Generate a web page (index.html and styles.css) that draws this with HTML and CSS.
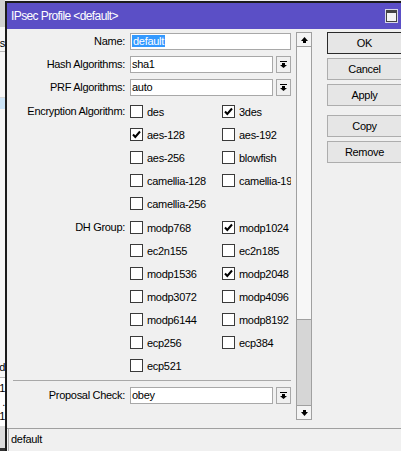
FILE: index.html
```html
<!DOCTYPE html>
<html lang="en">
<head>
  <meta charset="UTF-8">
  <title>IPsec Profile &lt;default&gt;</title>
  <link rel="stylesheet" href="styles.css">
</head>
<body>
  <div class="desk">
    <div class="behind">
      <div class="b-head"></div>
      <div class="b-row b-line b-first"><span>os</span></div>
      <div class="b-gap"></div>
      <div class="b-sel"></div>
      <div class="b-fill"></div>
      <div class="b-row b-line"><span>d</span></div>
      <div class="b-list">
        <span>1</span>
        <span>.</span>
        <span>1</span>
      </div>
      <div class="b-foot"></div>
    </div>

    <div class="window">
      <div class="titlebar">
        <span class="title">IPsec Profile &lt;default&gt;</span>
        <span class="max-btn"></span>
      </div>

      <div class="main">
        <div class="form-area">
          <div class="form">
            <label>Name:</label>
            <div class="input"><span class="selected">default</span></div>

            <label>Hash Algorithms:</label>
            <div class="combo">
              <div class="input">sha1</div>
              <span class="drop"><svg width="7" height="7" viewBox="0 0 7 7"><rect x="0" y="0" width="7" height="1" fill="#000"/><rect x="2" y="2" width="3" height="2" fill="#000"/><polygon points="0,4 7,4 3.5,7" fill="#000"/></svg></span>
            </div>

            <label>PRF Algorithms:</label>
            <div class="combo">
              <div class="input">auto</div>
              <span class="drop"><svg width="7" height="7" viewBox="0 0 7 7"><rect x="0" y="0" width="7" height="1" fill="#000"/><rect x="2" y="2" width="3" height="2" fill="#000"/><polygon points="0,4 7,4 3.5,7" fill="#000"/></svg></span>
            </div>

            <label class="top">Encryption Algorithm:</label>
            <div class="checks" id="encChecks"></div>

            <label class="top">DH Group:</label>
            <div class="checks" id="dhChecks"></div>

            <div class="sep"></div>

            <label>Proposal Check:</label>
            <div class="combo">
              <div class="input">obey</div>
              <span class="drop"><svg width="7" height="7" viewBox="0 0 7 7"><rect x="0" y="0" width="7" height="1" fill="#000"/><rect x="2" y="2" width="3" height="2" fill="#000"/><polygon points="0,4 7,4 3.5,7" fill="#000"/></svg></span>
            </div>
          </div>

          <div class="scroll">
            <span class="sbtn"><svg width="7" height="6" viewBox="0 0 7 6"><polygon points="3.5,0 7,4 0,4" fill="#000"/><rect x="2" y="4" width="3" height="2" fill="#000"/></svg></span>
            <div class="track"></div>
            <div class="thumb"></div>
            <span class="sbtn"><svg width="7" height="6" viewBox="0 0 7 6"><rect x="2" y="0" width="3" height="2" fill="#000"/><polygon points="0,2 7,2 3.5,6" fill="#000"/></svg></span>
          </div>
        </div>

        <div class="buttons">
          <button class="default">OK</button>
          <button>Cancel</button>
          <button>Apply</button>
          <button class="spaced">Copy</button>
          <button>Remove</button>
        </div>
      </div>

      <div class="status">
        <div class="status-field">default</div>
      </div>
    </div>
  </div>

  <script>
    const encryption = [
      ['des', false], ['3des', true],
      ['aes-128', true], ['aes-192', false],
      ['aes-256', false], ['blowfish', false],
      ['camellia-128', false], ['camellia-192', false],
      ['camellia-256', false]
    ];
    const dhGroups = [
      ['modp768', false], ['modp1024', true],
      ['ec2n155', false], ['ec2n185', false],
      ['modp1536', false], ['modp2048', true],
      ['modp3072', false], ['modp4096', false],
      ['modp6144', false], ['modp8192', false],
      ['ecp256', false], ['ecp384', false],
      ['ecp521', false]
    ];

    function fillChecks(id, items) {
      const box = document.getElementById(id);
      items.forEach(([name, on]) => {
        const item = document.createElement('div');
        item.className = 'check';
        item.innerHTML = '<span class="box">' +
          (on ? '<svg width="11" height="11" viewBox="0 0 11 11"><path d="M2 5.5 L4.3 8 L9 2.5" fill="none" stroke="#000" stroke-width="2"/></svg>' : '') +
          '</span><span class="name">' + name + '</span>';
        box.appendChild(item);
      });
    }

    fillChecks('encChecks', encryption);
    fillChecks('dhChecks', dhGroups);
  </script>
</body>
</html>
```

FILE: styles.css
```css
body {
  margin: 0;
  width: 401px;
  height: 451px;
  overflow: hidden;
  background: #f0f0f0;
  font-family: "Liberation Sans", Arial, sans-serif;
  font-size: 11px;
  letter-spacing: -0.3px;
  color: #000;
}
.desk {
  display: flex;
  height: 451px;
}

/* window behind the dialog */
.behind {
  width: 5px;
  flex-shrink: 0;
  display: flex;
  flex-direction: column;
  background: #f7f7f7;
  overflow: hidden;
}
.b-head {
  height: 27px;
  background: #d2d2d2;
}
.b-row {
  height: 20px;
  display: flex;
  justify-content: flex-end;
  align-items: center;
  white-space: nowrap;
}
.b-first {
  height: 16px;
  padding-top: 8px;
}
.b-line {
  border-bottom: 1px solid #b9b9b9;
}
.b-gap {
  height: 45px;
  border-bottom: 1px solid #d8d8d8;
}
.b-sel {
  height: 11px;
  background: #cce4f7;
}
.b-fill {
  height: 248px;
}
.b-list {
  display: flex;
  flex-direction: column;
  align-items: flex-end;
  gap: 1px;
  padding-top: 4px;
  height: 44px;
  line-height: 13px;
  background: #ffffff;
}
.b-foot {
  flex: 1;
  background: #dcdcdc;
  border-bottom: 3px solid #333;
}

/* dialog */
.window {
  flex: 1;
  display: flex;
  flex-direction: column;
  margin-top: 1px;
  border-top: 2px solid #1c1c1c;
  border-left: 2px solid #1c1c1c;
  background: #f0f0f0;
}
.titlebar {
  height: 26px;
  flex-shrink: 0;
  display: flex;
  align-items: center;
  justify-content: space-between;
  padding-left: 4px;
  background: #5b4fc6;
  color: #fff;
}
.title {
  font-size: 12px;
  letter-spacing: -0.6px;
}
.max-btn {
  width: 9px;
  height: 8px;
  margin-right: 5px;
  border: 1px solid #444;
  border-top-width: 3px;
  background: #f4f4f4;
  box-shadow: 0 0 0 1px #d8d8e8;
}

.main {
  flex: 1;
  display: flex;
  padding-top: 3px;
}
.form-area {
  display: flex;
  gap: 5px;
  padding-left: 3px;
}
.form {
  display: grid;
  grid-template-columns: 115px 161px;
  column-gap: 5px;
  row-gap: 6px;
  align-content: start;
  padding-top: 1px;
}
.form label {
  text-align: right;
  line-height: 17px;
  white-space: nowrap;
}
.form label.top {
  align-self: start;
  padding-top: 1px;
}
.input {
  height: 17px;
  box-sizing: border-box;
  border: 1px solid #a8a8a8;
  background: #fff;
  padding-left: 1px;
  line-height: 15px;
  white-space: nowrap;
  overflow: hidden;
}
.selected {
  background: #3399ff;
  color: #fff;
  padding: 0 1px;
}
.combo {
  display: flex;
  gap: 3px;
}
.combo .input {
  flex: 1;
}
.drop {
  width: 15px;
  height: 17px;
  box-sizing: border-box;
  border: 1px solid #a8a8a8;
  background: #f0f0f0;
  display: flex;
  align-items: center;
  justify-content: center;
}

.checks {
  display: grid;
  grid-template-columns: 92px 70px;
  row-gap: 6px;
  padding-top: 1px;
  overflow: hidden;
}
.check {
  height: 17px;
  display: flex;
  align-items: center;
  gap: 4px;
  white-space: nowrap;
}
.check .box {
  width: 13px;
  height: 13px;
  flex-shrink: 0;
  box-sizing: border-box;
  border: 1px solid #3a3a3a;
  background: #fff;
  display: flex;
  align-items: center;
  justify-content: center;
}
.sep {
  grid-column: 1 / -1;
  height: 0;
  margin-left: 3px;
  border-top: 1px solid #a8a8a8;
}

.scroll {
  width: 16px;
  height: 388px;
  box-sizing: border-box;
  display: flex;
  flex-direction: column;
  border-left: 1px solid #a0a0a0;
  border-right: 1px solid #a0a0a0;
  background: #f7f7f7;
}
.sbtn {
  height: 15px;
  flex-shrink: 0;
  box-sizing: border-box;
  border-top: 1px solid #a0a0a0;
  border-bottom: 1px solid #a0a0a0;
  background: #f4f4f4;
  display: flex;
  align-items: center;
  justify-content: center;
}
.track {
  flex: 1;
}
.thumb {
  height: 86px;
  box-sizing: border-box;
  border-top: 1px solid #a0a0a0;
  background: #d6d6d6;
}

.buttons {
  display: flex;
  flex-direction: column;
  gap: 4px;
  margin-left: 15px;
  padding-top: 0;
}
button {
  width: 75px;
  height: 22px;
  box-sizing: border-box;
  border: 1px solid #adadad;
  background: #e6e6e6;
  font-family: inherit;
  font-size: 11px;
  letter-spacing: -0.3px;
  color: #000;
  padding: 0;
}
button.default {
  border: 1px solid #2a2a2a;
}
button.spaced {
  margin-top: 5px;
}

.status {
  height: 22px;
  flex-shrink: 0;
  border-top: 1px solid #a0a0a0;
  padding-left: 1px;
  display: flex;
}
.status-field {
  flex: 1;
  border-left: 1px solid #b0b0b0;
  padding-left: 2px;
  line-height: 20px;
}
```
